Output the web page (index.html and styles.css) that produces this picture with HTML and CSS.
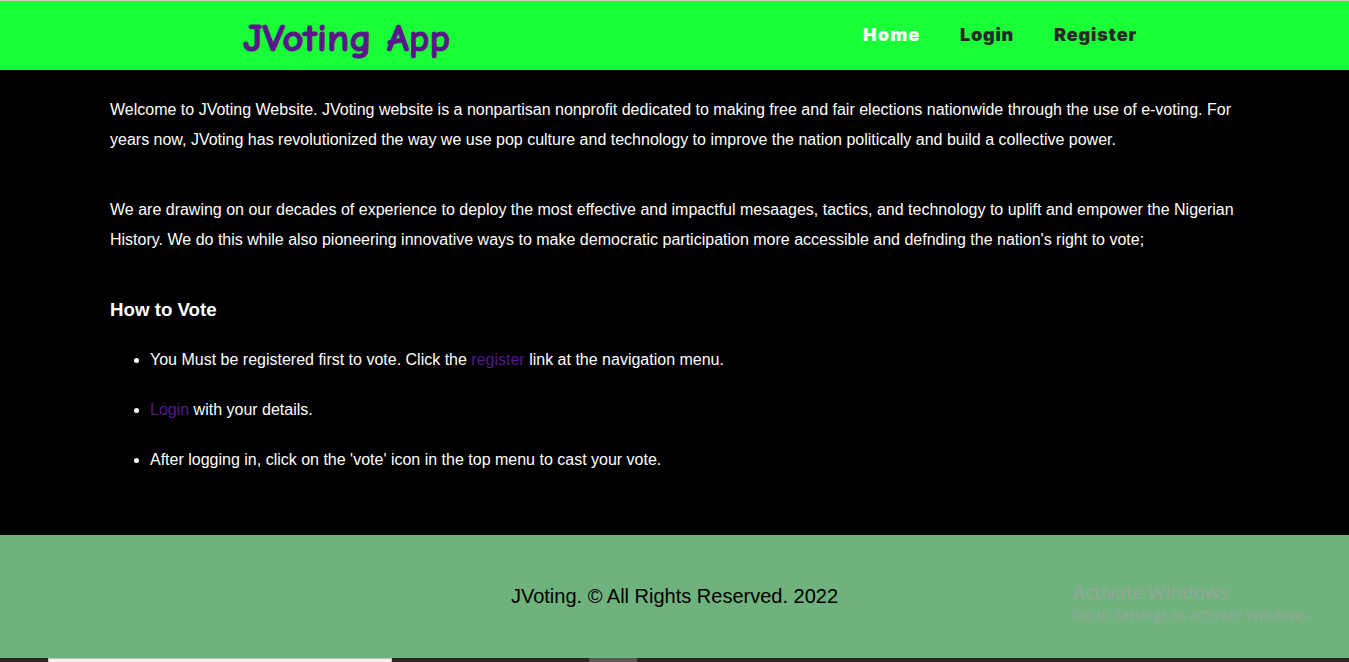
FILE: index.html
```html
<!DOCTYPE html>
<html lang="en">
<head>
<meta charset="utf-8">
<title>JVoting App</title>
<link rel="stylesheet" href="styles.css">
</head>
<body>
<header class="header">
  <svg class="logo" width="212" height="69" role="img" aria-label="JVoting App"><text x="1" y="49.5" textLength="129" lengthAdjust="spacingAndGlyphs">JVoting</text><text x="145" y="49.5" textLength="63" lengthAdjust="spacingAndGlyphs">App</text></svg>
  <nav class="nav">
    <a class="nav-link active w-home">Home</a>
    <a class="nav-link w-login">Login</a>
    <a class="nav-link w-register">Register</a>
  </nav>
</header>
<main class="main">
  <p>Welcome to JVoting Website. JVoting website is a nonpartisan nonprofit dedicated to making free and fair elections nationwide through the use of e-voting. For years now, JVoting has revolutionized the way we use pop culture and technology to improve the nation politically and build a collective power.</p>
  <p>We are drawing on our decades of experience to deploy the most effective and impactful mesaages, tactics, and technology to uplift and empower the Nigerian History. We do this while also pioneering innovative ways to make democratic participation more accessible and defnding the nation's right to vote;</p>
  <h3>How to Vote</h3>
  <ul>
    <li>You Must be registered first to vote. Click the <a>register</a> link at the navigation menu.</li>
    <li><a>Login</a> with your details.</li>
    <li>After logging in, click on the 'vote' icon in the top menu to cast your vote.</li>
  </ul>
</main>
<footer class="footer">
  <p>JVoting. © All Rights Reserved. 2022</p>
  <div class="watermark"><div class="wm-title">Activate Windows</div><div class="wm-sub">Go to Settings to activate Windows.</div></div>
</footer>
<div class="taskbar"><span class="search"></span><span class="task"></span></div>
</body>
</html>
```
FILE: styles.css
```css
* { box-sizing: border-box; }
body { margin: 0; height: 662px; overflow: hidden; display: flex; flex-direction: column; background: #000; color: #fff; font-family: "Liberation Sans", Arial, sans-serif; font-size: 16px; line-height: 30px; }
.header { height: 70px; flex: none; border-top: 1px solid #d0d0d0; background: #19ff38; display: flex; justify-content: space-between; padding: 0 212px 0 242px; }
.logo text { font: bold 39px "Comic Sans MS", "Comic Neue", "DejaVu Sans", sans-serif; fill: #5c168b; stroke: #5c168b; stroke-width: 1px; stroke-linejoin: round; }
.nav { display: flex; gap: 40px; padding-top: 19px; }
.nav-link { font: 900 18px/29px Inter, "Liberation Sans", sans-serif; color: #2b2529; white-space: nowrap; }
.active { color: #fff; }
.w-home { width: 57px; letter-spacing: 1.2px; }
.w-login { width: 54px; letter-spacing: 0.8px; }
.w-register { width: 83px; letter-spacing: 0.9px; }
.main { height: 465px; flex: none; padding: 25px 110px 0; }
.main p { margin: 0 0 40px; }
.main h3 { margin: 0 0 20px; font-size: 18.72px; line-height: 30px; }
.main ul { margin: 0; padding-left: 40px; }
.main li { margin-bottom: 20px; }
.main a { color: #551a8b; }
.footer { position: relative; height: 123px; flex: none; background: #6fb27e; color: #000; text-align: center; }
.footer p { margin: 0; padding-top: 46px; font-size: 20px; }
.watermark { position: absolute; left: 1073px; top: 45px; text-align: left; color: #95a79b; font-family: "Segoe UI", "Open Sans", sans-serif; white-space: nowrap; }
.wm-title { font-size: 19px; line-height: 25px; }
.wm-sub { font-size: 14px; line-height: 20px; letter-spacing: 0.25px; }
.taskbar { display: flex; height: 4px; flex: none; background: #2c2628; padding-left: 48px; gap: 197px; }
.search { width: 344px; background: #f2f2f2; border: 1px solid #bfbcbd; border-bottom: 0; }
.task { width: 48px; background: #5b5759; }
```
